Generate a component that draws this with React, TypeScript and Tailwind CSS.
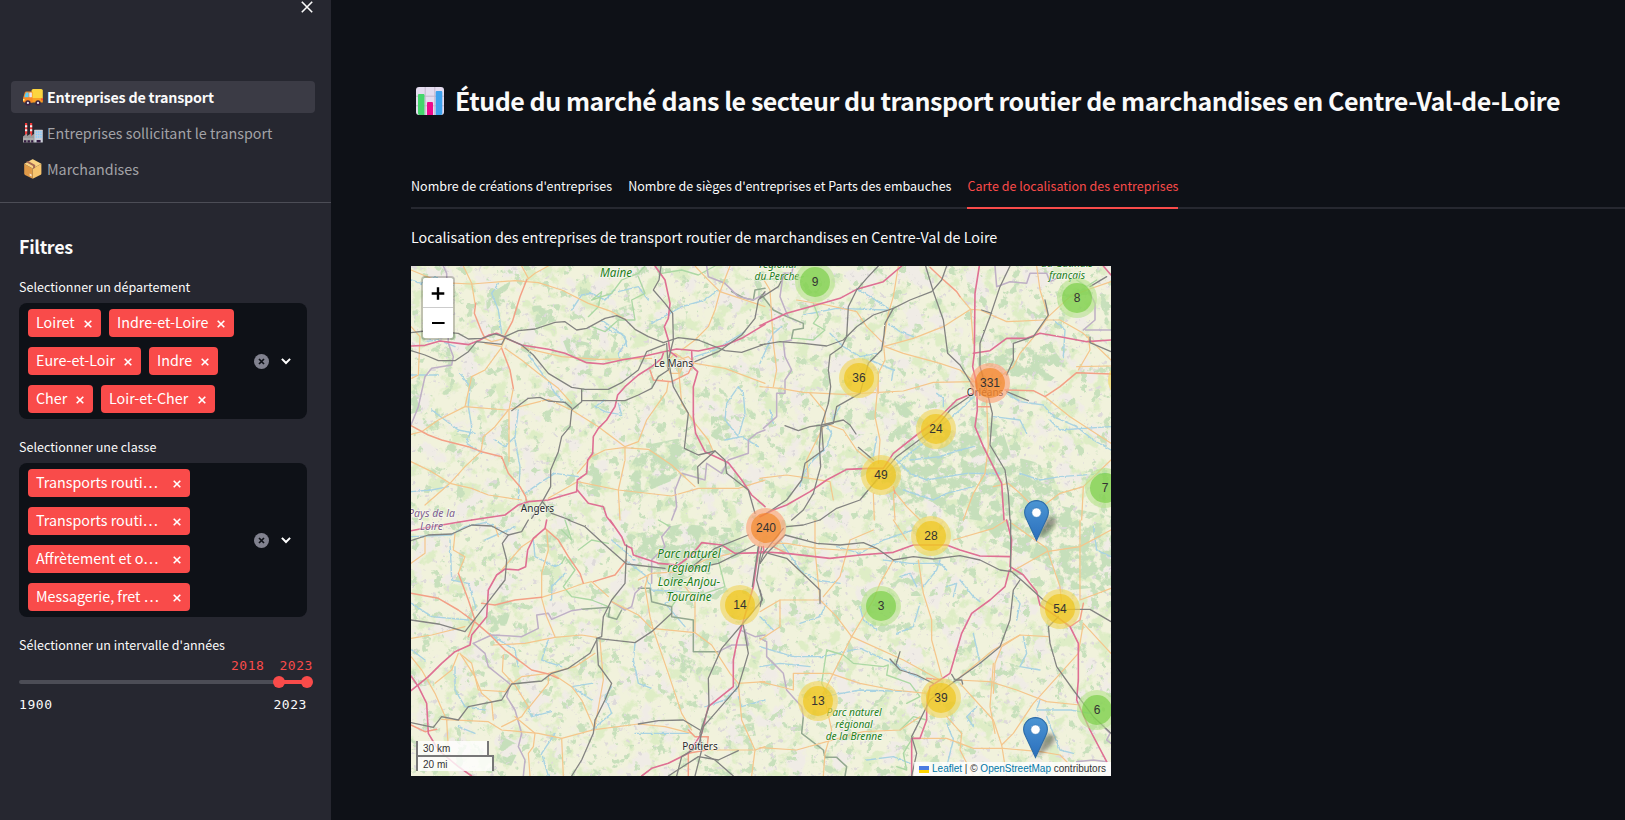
import type { ReactNode } from "react";

const sans = "font-['Noto_Sans_CJK_JP','Noto_Sans',sans-serif]";

type Quad = {
  motorway: string[];
  trunk: string[];
  road: string[];
  rail: string[];
  river: string[];
  border: string[];
  park: string[];
  parkEdge: string[];
};

const northWest: Quad = {
  motorway: [
    "18,258 60,256 105,243 190,254 225,240 250,226 275,220 310,238 350,255 430,268 480,280 545,308 595,312 650,300 720,288 770,277 815,267 880,273 960,256 1010,235 1080,193",
    "750,18 780,60 795,130 790,175 778,200 790,240 795,275 815,290",
    "775,280 770,295 740,320 700,345 660,380 638,405 630,440 605,480 580,505 565,530 563,580 548,600 545,640 517,660 515,695 470,708 430,720 370,725 340,735 300,765 200,780",
    "860,275 862,320 878,335 865,380 865,470 872,520 900,575 935,592 970,608 1010,660 1040,705 1080,740",
    "517,690 550,730 595,740 605,770 625,795",
  ],
  trunk: [
    "212,130 208,160 230,215 240,235",
    "300,225 322,185 345,110 365,60",
    "18,497 70,525 110,540 190,560 230,575 290,590 310,640 345,680 362,710 365,725",
    "290,265 315,330 325,385",
    "735,330 745,360 800,365 850,340 865,310",
  ],
  road: [
    "175,18 200,70 210,130",
    "18,30 110,68 200,72 330,62 400,68 470,90 550,130 620,155 665,180",
    "365,60 390,40 430,18",
    "350,18 370,55",
    "20,355 40,345 45,230 18,200",
    "290,262 240,330 200,350 180,440 100,480 50,515 18,523",
    "180,440 305,450 430,418 500,450 580,500 660,560 700,545 725,480 785,395 790,365",
    "325,385 312,450 312,605",
    "310,450 270,500 235,530 228,575",
    "228,575 180,620 135,670 60,735",
    "18,605 80,635 135,670 200,685 250,705 350,720",
    "300,265 350,300 400,340 460,385 500,430",
    "350,262 470,290 580,298 740,295",
    "517,640 560,590 600,570 655,563 730,568 800,615 870,680",
    "660,560 660,600 640,690 645,780",
    "430,715 517,665 640,690 800,708 880,685 1000,685 1080,660",
    "820,300 850,290 870,310 960,325 1080,370",
    "830,270 870,240 910,200 930,150 945,95 975,18",
    "820,320 830,430 870,490 910,540 925,575",
    "945,95 1080,140",
    "945,95 900,50 870,18",
    "240,235 260,245 300,235 290,260 240,250",
    "790,300 810,280 840,300 825,340 795,340 785,315",
  ],
  rail: [
    "18,218 60,213 100,215 160,220 190,237 230,235 270,222 300,230 340,212 390,207 450,187 480,185 515,210 545,205 600,175 635,167 660,178 690,208 730,230 775,248 820,233 880,240 960,272 1010,277 1080,252",
    "18,272 60,285 100,302 150,302 190,275 215,245 290,253 300,233 350,255 385,285 430,340 500,382 540,388 610,388 650,368 700,330 725,275 780,253",
    "530,388 530,425 500,450 495,500 470,530 460,575 437,630 437,680 412,725 380,775",
    "320,452 370,415 405,412 430,423 480,427 500,445",
    "530,422 660,422 700,405 740,385 760,350 790,330 785,250",
    "768,18 762,60 745,90 780,130 803,160 805,240 790,300 805,380 850,460 838,565 880,585 930,573 960,600 965,640 1030,690 1050,760",
    "870,305 940,275 1010,225 1050,175 1060,120 1080,95",
    "412,725 440,760 495,780",
    "930,573 878,620 880,670",
  ],
  river: [
    "145,75 90,50 50,70 18,60",
    "340,450 330,530 300,560 270,540",
    "370,285 430,365 450,400 480,430",
    "360,700 410,665 450,640 520,650",
    "600,200 620,215 650,220 665,245 640,280 645,300",
    "1000,380 965,430 960,480 1000,530 1020,460 1015,400 1000,380",
    "740,190 830,140 900,120 940,90",
    "340,720 345,620 330,540",
    "630,90 600,120 560,100 530,105 500,150",
    "165,340 195,380 190,440 200,500 185,550 230,580",
    "18,345 100,345",
    "80,450 120,480 160,510 210,520",
    "640,95 700,80 730,120",
    "960,540 1010,530 1060,560",
    "280,70 260,100 280,150 290,220",
    "150,260 100,240 60,245",
    "600,420 570,440 600,455 650,465 640,430",
    "870,290 930,270 1020,215",
    "18,695 80,690 130,680",
    "590,180 660,230 665,260",
  ],
  border: [
    "18,495 40,440 60,350 80,325 140,315 145,290 130,250 125,40 115,18",
    "1080,510 1055,520 1030,540 1030,580 970,600 950,640 905,610 900,660 830,640 810,690 815,740 800,780",
    "905,18 910,50 960,70 1000,110 1045,120 1080,100",
  ],
  park: [
    "550,170 580,140 590,95 560,120 620,100 650,60 700,40 720,18",
    "560,200 600,215 640,180 690,180 680,120 720,100 700,50",
    "770,40 830,30 880,45 930,18",
  ],
  parkEdge: ["980,95 1020,115 1045,120 1050,90 1080,85"],
};

const northEast: Quad = {
  motorway: [
    "0,197 80,160 150,140 240,115 290,88 370,65 425,18",
    "658,18 645,100 643,280 638,320 650,370 652,450 645,500 670,560 725,670 732,780",
    "640,280 690,272 740,235 800,235 840,220 900,230 980,245 1053,240",
    "650,395 590,420 530,480 470,525 400,580 370,625 330,625 260,628 200,660 150,695 80,735 40,750 0,770",
    "1030,18 1053,45",
  ],
  trunk: [
    "510,22 540,50 590,95 600,110",
    "1053,342 950,338 900,380 855,410 820,392 735,390",
    "400,680 405,700",
    "655,440 690,440",
  ],
  road: [
    "415,18 400,110 385,160 370,245 375,300 355,340 355,400",
    "0,380 60,385 130,397 250,403 430,393 520,367 650,365",
    "370,260 460,235 550,200 632,148 660,150 740,185 850,180 900,180 970,220 1053,300",
    "830,18 840,90 865,170 830,220 780,280 760,320 720,350",
    "600,110 632,148 640,250",
    "355,360 345,470 360,540 355,610",
    "150,400 195,455 195,490 250,510 290,570 340,610",
    "375,260 430,280 540,310 600,330 650,370",
    "680,420 685,560 675,640 640,700 610,780",
    "400,690 440,740 480,780",
    "970,680 965,780",
    "1053,600 970,680 900,700 840,745",
    "855,410 930,470 1053,550",
    "0,40 30,90 40,250 50,330 40,380",
    "110,120 200,135 290,155 320,200 365,245",
    "340,700 343,780",
    "400,700 405,780",
    "0,655 80,645 150,655 210,665 220,720",
    "145,650 140,600 190,500",
    "865,170 930,110 980,90 1053,65",
    "955,330 990,270 985,230",
    "950,320 1053,318",
    "700,680 745,670 780,700 860,780",
  ],
  rail: [
    "0,255 60,245 130,250 200,258 250,240 290,200 340,165 400,145 450,120 515,95 545,60 560,18",
    "355,18 320,55 290,90 265,140 260,230 245,260 210,285 205,330 212,380 205,430 183,500 178,560 182,620 160,700 130,750 95,780",
    "497,18 520,95 550,180 563,280 600,315 640,380",
    "750,18 720,80 690,170 660,250 660,320 680,390 697,460 690,555 735,630 745,700 750,780",
    "635,405 570,450 530,500 470,545 410,590 350,660 300,720 230,745 180,780",
    "400,145 375,190 372,225 365,270 325,310 300,400 230,440 220,490 185,500",
    "740,395 805,422",
    "740,345 760,300 760,250 820,230 865,165 855,120",
    "990,80 1040,50",
    "990,232 990,248 1053,275",
    "75,497 115,512 150,500 185,495 250,480 270,495 288,522",
    "295,562 340,600",
    "665,150 695,160",
    "0,115 55,80 75,40",
    "185,500 190,570 135,610 125,660 80,720 20,760",
  ],
  river: [
    "740,400 780,425 850,435 880,470 950,500 1000,540 1053,570",
    "640,410 600,450 540,500 500,540 430,595 380,640",
    "290,85 330,110 385,145",
    "385,190 420,215 460,230",
    "130,165 230,145 380,150",
    "210,220 250,260 300,290 350,280",
    "530,400 550,415 550,440",
    "0,310 40,220 65,200",
    "780,640 840,660 900,650 1040,640",
    "450,600 540,590 600,570 640,560",
    "410,600 450,640 500,660 620,640 720,640",
    "190,480 215,520 200,560 160,600 130,640 120,680",
    "910,290 915,210 880,180",
    "350,530 340,590",
    "330,300 400,330 395,360",
    "640,680 560,700 520,720 430,690",
    "870,480 900,510 1053,500",
    "215,480 240,440",
    "700,470 780,480 800,520",
    "30,450 40,490",
  ],
  border: [
    "705,18 710,80 750,65 800,70 810,40 860,40 870,65 900,50",
    "985,90 1005,130 1005,180 970,210 1053,210",
    "100,18 95,40 70,40 60,110 80,160 85,170",
    "95,240 70,245 75,290 95,330 75,360 75,400 50,400 50,470 10,505",
  ],
  park: [
    "0,60 60,55 90,60 130,50",
    "160,130 175,170 160,190 195,210 160,240 110,235 95,235",
    "950,60 980,80 1010,60",
  ],
  parkEdge: ["5,105 40,150 70,165 130,190 130,205 100,210 95,235"],
};

const southWest: Quad = {
  motorway: [
    "18,32 80,20 150,8 200,0",
    "425,0 420,25 385,55 368,90 362,140 340,150 300,147 275,165 250,210 245,290 200,345 195,375 150,395 110,430 70,470 18,512",
    "18,468 40,500 65,550 70,640 100,690 160,740 200,768",
    "615,0 650,50 660,75 680,85 685,105 760,130 820,135 860,105 890,68 950,75 990,100 1080,98",
    "1062,80 1045,200 1010,320 997,360 985,420 985,500 910,560 890,640 850,700 790,730 740,745 710,768",
  ],
  trunk: [
    "18,220 100,235 160,270 215,310 250,340 300,390 380,450 430,462 460,475",
    "230,250 270,255 330,240 410,232",
    "420,25 460,60 490,110 525,160 535,190",
    "565,185 630,165 665,120",
    "160,160 190,240 210,300 190,350",
    "850,630 870,650 910,650 905,690 850,700 850,768",
    "18,615 60,635 95,628",
  ],
  road: [
    "60,50 60,100 18,130",
    "150,40 145,90 180,110 160,160",
    "410,232 410,160 430,90 425,30",
    "410,232 480,210 530,192 560,185 610,230",
    "18,355 80,345 180,320",
    "410,235 425,290 450,350",
    "265,375 360,370 450,352 530,345 575,352",
    "620,245 700,285 740,325 870,338 920,375 975,460 1000,490 1080,485",
    "870,338 870,240 840,200",
    "730,165 720,200 735,290 745,330 790,460 830,580 860,630",
    "585,360 595,480 570,620",
    "295,405 292,455 330,495 370,560 350,590 290,620",
    "430,465 430,490 370,565",
    "440,460 500,500 530,540 570,630",
    "570,628 470,655 400,640 290,630 250,605 110,598",
    "470,655 475,768",
    "330,590 390,640 385,680 370,700 375,768",
    "575,628 700,612 780,620 860,640",
    "18,410 50,450 90,520 125,600 130,690",
    "1000,490 1010,600 1050,690 1040,768",
    "900,690 1050,690 1080,680",
    "165,400 210,470 230,520 260,545 265,600",
    "170,405 200,430 220,510 300,515 320,490",
    "160,400 140,450 90,490",
    "320,492 350,470 430,460 510,440 570,400",
    "290,150 350,80 395,50",
    "700,180 740,160 830,155 900,120 980,100",
    "280,50 270,18",
  ],
  rail: [
    "18,62 70,45 140,42 200,15 260,18 310,45 350,35 370,0",
    "310,45 292,70 305,120 300,180 250,245 215,290 180,335 100,312 18,300",
    "490,0 540,20 600,75 665,132 780,145",
    "665,75 660,190 620,240 595,290 590,350 575,355 580,435 620,490 600,540 570,600 565,640 530,720 500,768",
    "575,355 690,368 740,335 800,280",
    "575,360 555,400 490,445 440,460 410,483 320,492 290,540 190,560 160,600 110,590 85,622 18,608",
    "1070,80 1055,180 1072,240 1010,315 950,385 910,475 912,560 885,640 890,690 870,768",
    "1015,315 1030,400 1000,500 930,580 895,620 880,680 830,710 815,768",
    "700,612 760,602 835,600 885,630",
    "850,150 930,85 1030,45",
    "870,145 940,130 1050,75",
    "790,768 880,710 940,720 1000,692",
    "900,705 930,720 985,768",
    "1060,80 1042,200",
  ],
  river: [
    "18,50 140,45 180,20 240,8 280,25",
    "135,60 140,180 190,190 215,270",
    "240,60 330,20",
    "385,60 390,110 450,140 470,130",
    "690,370 685,420 700,490 740,505",
    "560,630 620,580 600,530 620,500",
    "690,640 760,640 850,640",
    "250,340 330,390 340,440",
    "430,360 410,420 470,440",
    "370,560 380,590 440,575",
    "450,640 410,700 430,768",
    "160,620 210,640",
    "20,390 60,420",
    "560,540 500,500 560,490",
    "660,120 720,165 740,210 830,215",
    "150,440 150,510 180,560 240,570",
    "20,250 80,290 190,300",
    "480,160 440,200 440,240",
    "620,60 690,120",
    "1080,540 1010,560 1000,530",
    "900,560 960,540 1000,500",
    "800,240 780,250 840,320",
  ],
  border: [
    "205,370 240,400 250,440 315,492 305,530 330,570 350,640 340,680 360,720 355,768",
    "205,370 260,345 350,350 400,325 395,285 430,280 440,298 500,272 530,268",
    "1005,330 1050,350 1080,345",
    "740,190 740,120 780,80 770,50 795,20",
    "620,245 660,270 680,260 690,220 710,200",
    "940,395 980,375 1030,375 1020,330",
  ],
  park: [
    "470,130 480,110 510,150 475,200 500,230 560,240 610,260",
    "795,20 760,0",
    "470,30 500,60 480,0",
    "610,70 560,60 520,90",
    "800,260 830,215 900,220 960,200 940,120",
  ],
  parkEdge: [
    "530,268 615,262 610,290 635,298 650,270",
    "700,205 735,205 740,245 800,260 800,290 865,300 865,395 940,395",
  ],
};

const southEast: Quad = {
  motorway: [
    "0,95 80,100 210,115 300,105 400,97 460,75 560,75 600,90 660,108 750,110",
    "740,0 755,60 750,140 790,165 830,215 840,255 890,290 930,320 955,370 955,480 950,540 990,630 1040,725",
    "748,150 735,200 690,240 635,280 605,340 570,460 510,500 500,560 500,600 480,655 455,655 455,768",
    "10,80 12,100",
  ],
  trunk: [
    "970,250 960,300 930,320",
    "540,480 500,475",
    "80,100 40,80",
  ],
  road: [
    "0,360 60,320 60,240 0,275",
    "60,240 180,240",
    "180,240 230,290 275,350 430,420 540,480",
    "275,350 340,240 360,190 400,120",
    "165,0 165,90 180,240",
    "40,70 80,70 170,85 240,90 350,85",
    "190,230 240,170 270,60 340,30",
    "275,350 235,430 210,480 190,520 215,630 195,700 190,768",
    "0,485 100,510 100,460 210,460 300,490 400,510 500,520",
    "0,683 110,690 200,665 310,635 420,630 480,590",
    "475,120 490,220 515,300 515,360 545,470",
    "590,480 690,485 770,510 860,545 960,555",
    "600,490 700,600 725,675 740,768",
    "725,675 760,640 820,550 955,400 970,310",
    "700,520 705,430 725,380 780,345 865,350",
    "755,10 860,85 900,200 905,250",
    "960,0 960,240 1053,205",
    "755,155 860,95 960,80 1053,30",
    "460,655 560,655 640,685 730,685 840,695 900,705 930,735",
    "560,590 605,640 600,690 640,768",
    "590,480 700,390 780,345",
    "1053,400 970,310",
    "440,60 400,0",
    "700,430 690,560 705,640",
    "580,60 700,25 740,0",
  ],
  rail: [
    "0,130 25,95 75,45 170,70 240,75 310,68 350,85 400,120 460,110 520,117 600,107 660,120 720,150 755,155 790,185 850,240 900,268 990,268 1053,305",
    "752,0 752,155",
    "780,180 760,210 750,300 720,380 660,430 580,487 510,540 455,650 470,700 455,768",
    "390,417 420,450 470,465 520,490",
    "25,100 80,115 180,210 180,250",
    "895,290 865,320 870,370 890,440 940,510 1000,590 1053,640",
    "420,395 408,435",
    "575,463 585,480 605,480 608,492",
    "80,20 130,15 180,0",
    "0,130 10,100 70,25",
    "0,210 6,235 0,260",
  ],
  river: [
    "0,380 100,410 190,410 300,385 400,430 450,460 490,480",
    "60,60 120,150 170,180 240,190",
    "540,120 530,150 490,200",
    "600,180 640,230 660,245",
    "370,120 450,130 540,130 560,150",
    "790,350 800,400 780,440 840,450",
    "300,260 310,300 350,330",
    "190,530 300,510 450,515",
    "480,250 460,320 410,340",
    "990,580 930,570 830,570 840,540",
    "320,720 400,710 450,730",
    "560,610 580,660 560,740 620,768",
    "760,220 780,250 770,300",
    "640,340 660,430",
    "230,80 300,100 370,60 460,30",
    "420,170 450,160 470,200",
    "120,310 180,290 200,250",
    "1000,20 1010,90 1053,110",
    "0,290 40,330",
    "560,200 590,190 580,230",
    "860,590 900,690 940,700",
    "0,440 60,430 150,440",
    "640,620 620,590 650,560",
  ],
  border: [
    "0,355 20,365 20,410 70,460 80,510 125,560 130,590",
    "950,725 1000,720 1040,725",
    "1035,625 1050,640 1040,660 1053,670",
  ],
  park: [
    "200,390 185,490 200,520",
    "200,390 250,405 280,430 370,440 385,435 380,465 450,490 480,530 440,550",
    "420,630 460,590 500,600",
    "460,650 430,700 440,750 410,740",
  ],
  parkEdge: ["130,590 125,640 190,690 195,712 230,712 260,740 255,768"],
};

function Lines({ items, color, width }: { items: string[]; color: string; width: number }) {
  return (
    <g fill="none" stroke={color} strokeWidth={width} strokeLinejoin="round" strokeLinecap="round">
      {items.map((p) => (
        <polyline key={p} points={p} />
      ))}
    </g>
  );
}

function Quadrant({ q, x, y }: { q: Quad; x: number; y: number }) {
  return (
    <g transform={`translate(${x} ${y}) scale(0.33333)`}>
      <g filter="url(#wiggleRiver)">
        <Lines items={q.river} color="#a9d3e2" width={4.2} />
      </g>
      <g filter="url(#wiggle)">
        <Lines items={q.park} color="#acd8a4" width={4} />
        <Lines items={q.parkEdge} color="#93a890" width={4.6} />
        <Lines items={q.border} color="#bfb0c6" width={4.6} />
        <Lines items={q.road} color="#f5c68c" width={3.7} />
        <Lines items={q.trunk} color="#f3a086" width={4.4} />
        <Lines items={q.motorway} color="#df6f93" width={4.8} />
        <Lines items={q.rail} color="#838381" width={3.9} />
      </g>
    </g>
  );
}

function Speckle({ id, freq, seed, gain, cut, color }: { id: string; freq: number; seed: number; gain: number; cut: number; color: string }) {
  return (
    <filter id={id} x="0" y="0" width="100%" height="100%" colorInterpolationFilters="sRGB">
      <feTurbulence type="fractalNoise" baseFrequency={freq} numOctaves={5} seed={seed} />
      <feColorMatrix type="matrix" values={`0 0 0 0 0  0 0 0 0 0  0 0 0 0 0  ${gain} 0 0 0 ${-gain * cut}`} result="m" />
      <feFlood floodColor={color} />
      <feComposite in2="m" operator="in" />
      <feComposite in2="SourceGraphic" operator="in" />
    </filter>
  );
}

const woods = [
  "480,165 505,150 540,165 560,150 590,160 600,190 640,200 650,240 700,250 700,330 640,300 590,280 570,255 540,250 520,235 480,240 470,215 500,190",
  "566,92 600,82 640,80 655,100 640,115 610,112 590,108 568,104",
  "468,132 490,136 505,150 495,152 470,140",
  "215,270 270,258 320,262 330,290 300,300 260,320 230,300",
  "590,395 610,400 600,410 580,420 590,400",
  "75,30 100,15 90,40 76,50",
  "120,40 150,38 145,55 128,60",
  "150,70 190,80 200,95 160,95",
  "200,45 220,38 226,46 205,54",
  "300,140 325,160 315,180 300,170",
  "230,180 270,172 290,190 260,215 225,230 215,210",
  "180,200 195,205 190,225 175,220",
  "640,290 690,290 700,320 650,325",
  "255,380 285,395 278,412 262,400",
  "320,450 340,445 345,470 325,470",
  "90,470 110,480 100,500 85,495",
  "75,350 100,345 95,360 75,358",
  "130,270 160,262 155,285 130,280",
  "498,315 510,310 512,330 500,330",
  "25,80 38,75 40,90 28,92",
  "0,130 10,128 10,145 0,148",
  "440,200 455,195 460,205 445,215",
];

function BaseMap() {
  return (
    <svg className="block" width="700" height="510" viewBox="0 0 700 510">
      <defs>
        <Speckle id="pale" freq={0.06} seed={7} gain={9} cut={0.55} color="#deedc6" />
        <Speckle id="beige" freq={0.045} seed={22} gain={9} cut={0.57} color="#f0ece6" />
        <Speckle id="wood" freq={0.09} seed={41} gain={14} cut={0.63} color="#c8e0bc" />
        <Speckle id="dense" freq={0.1} seed={13} gain={9} cut={0.43} color="#c6dfbb" />
        <Speckle id="town" freq={0.15} seed={5} gain={12} cut={0.69} color="#dedada" />
        <filter id="wiggle" x="-5%" y="-5%" width="110%" height="110%">
          <feTurbulence type="fractalNoise" baseFrequency="0.13" numOctaves={2} seed={3} />
          <feDisplacementMap in="SourceGraphic" scale={4} xChannelSelector="R" yChannelSelector="G" />
        </filter>
        <filter id="wiggleRiver" x="-5%" y="-5%" width="110%" height="110%">
          <feTurbulence type="fractalNoise" baseFrequency="0.1" numOctaves={1} seed={9} />
          <feDisplacementMap in="SourceGraphic" scale={9} xChannelSelector="R" yChannelSelector="G" />
        </filter>
      </defs>
      <rect width="700" height="510" fill="#f1f2dc" />
      <rect width="700" height="510" filter="url(#pale)" />
      <rect width="700" height="510" filter="url(#beige)" />
      <rect width="700" height="510" filter="url(#wood)" />
      <g filter="url(#dense)">
        {woods.map((w) => (
          <polygon key={w} points={w} />
        ))}
      </g>
      <rect width="700" height="510" filter="url(#town)" />
      <Quadrant q={northWest} x={-6} y={-6} />
      <Quadrant q={northEast} x={349} y={-6} />
      <Quadrant q={southWest} x={-6} y={254} />
      <Quadrant q={southEast} x={349} y={254} />
      <g className="font-['Noto_Sans',sans-serif]" textAnchor="middle" stroke="#ffffff90" strokeWidth="1.6" paintOrder="stroke" strokeLinejoin="round">
        <g fill="#2c2c2c" fontSize="10">
          <text x="262.5" y="101">Le Mans</text>
          <text x="126.500" y="246">Angers</text>
          <text x="574" y="130">Orléans</text>
          <text x="289" y="484">Poitiers</text>
        </g>
        <g fill="#7f5f8d" fontStyle="italic" fontSize="10.5">
          <text x="20.5" y="251">Pays de la</text>
          <text x="20.5" y="264">Loire</text>
        </g>
        <g fill="#1f801c" fontStyle="italic">
          <g fontSize="11.700">
            <text x="205" y="11">Maine</text>
            <text x="278" y="291.500">Parc naturel</text>
            <text x="278" y="306">régional</text>
            <text x="278" y="320">Loire-Anjou-</text>
            <text x="278" y="334.500">Touraine</text>
          </g>
          <g fontSize="10.200">
            <text x="367" y="1.500">régional</text>
            <text x="366" y="14">du Perche</text>
            <text x="656" y="1">du Gâtinais</text>
            <text x="656" y="13">français</text>
            <text x="443" y="450">Parc naturel</text>
            <text x="443" y="462">régional</text>
            <text x="443" y="474">de la Brenne</text>
          </g>
        </g>
      </g>
    </svg>
  );
}

const tones = {
  green: ["bg-[#b5e28c99]", "bg-[#6ecc3999]"],
  yellow: ["bg-[#f1d35799]", "bg-[#f0c20c99]"],
  orange: ["bg-[#fd9c7399]", "bg-[#f1801799]"],
} as const;

const clusters: { x: number; y: number; n: string; tone: keyof typeof tones }[] = [
  { x: 404, y: 16, n: "9", tone: "green" },
  { x: 666, y: 32, n: "8", tone: "green" },
  { x: 448, y: 112, n: "36", tone: "yellow" },
  { x: 717, y: 114, n: "", tone: "yellow" },
  { x: 579, y: 117, n: "331", tone: "orange" },
  { x: 525, y: 163, n: "24", tone: "yellow" },
  { x: 470, y: 209, n: "49", tone: "yellow" },
  { x: 694, y: 222, n: "7", tone: "green" },
  { x: 355, y: 262, n: "240", tone: "orange" },
  { x: 520, y: 270, n: "28", tone: "yellow" },
  { x: 470, y: 340, n: "3", tone: "green" },
  { x: 329, y: 339, n: "14", tone: "yellow" },
  { x: 649, y: 343, n: "54", tone: "yellow" },
  { x: 530, y: 432, n: "39", tone: "yellow" },
  { x: 407, y: 435, n: "13", tone: "yellow" },
  { x: 686, y: 444, n: "6", tone: "green" },
];

const pins = [
  { x: 625, y: 275 },
  { x: 624, y: 492 },
];

function Pin({ x, y }: { x: number; y: number }) {
  return (
    <svg className="absolute" style={{ left: x - 12, top: y - 41 }} width="42" height="42" viewBox="0 0 42 42">
      <defs>
        <linearGradient id="pin" x1="0" y1="0" x2="0" y2="1">
          <stop offset="0" stopColor="#4b95d3" />
          <stop offset="1" stopColor="#2b6fbd" />
        </linearGradient>
        <filter id="soft" x="-40%" y="-30%" width="180%" height="160%">
          <feGaussianBlur stdDeviation="2" />
        </filter>
      </defs>
      <path d="M13 40 L20 22C24 14 33 16 32 22 C31 28 22 34 13 40Z" fill="#000" opacity="0.38" filter="url(#soft)" />
      <path d="M12.5.6C5.8.6.6 5.800.6 12.400c0 2.600 1 4.800 2 6.800L12.500 40.400 22.400 19.200c1-2 2-4.200 2-6.800C24.400 5.800 19.200.6 12.500.6Z" fill="url(#pin)" stroke="#2e6da8" strokeWidth="1.1" />
      <circle cx="12.5" cy="12.6" r="4.700" fill="#fff" stroke="#3778b5" strokeWidth=".6" />
    </svg>
  );
}

function MapView() {
  return (
    <div className="relative h-[510px] w-[700px] overflow-hidden bg-[#f1f2dc] font-['Liberation_Sans',sans-serif]">
      <BaseMap />
      {clusters.map((c) => (
        <div key={`${c.x}-${c.y}`} className={`absolute flex size-10 items-center justify-center rounded-full ${tones[c.tone][0]}`} style={{ left: c.x - 20, top: c.y - 20 }}>
          <div className={`flex size-[30px] items-center justify-center rounded-full text-[12px] leading-none text-[#333] ${tones[c.tone][1]}`}>{c.n}</div>
        </div>
      ))}
      {pins.map((p) => (
        <Pin key={p.y} x={p.x} y={p.y} />
      ))}
      <div className="absolute left-[10px] top-[10px] flex flex-col overflow-hidden rounded-[4px] border-2 border-black/20 bg-clip-padding">
        <button className="flex h-[30px] w-[30px] items-center justify-center border-b border-[#ccc] bg-white">
          <svg width="14" height="14" viewBox="0 0 14 14">
            <path d="M.7 7.500h12.600M7 1.200v12.600" stroke="#000" strokeWidth="2.400" />
          </svg>
        </button>
        <button className="flex h-[30px] w-[30px] items-center justify-center bg-white">
          <svg width="14" height="14" viewBox="0 0 14 14">
            <path d="M1 7h12.600" stroke="#000" strokeWidth="2" />
          </svg>
        </button>
      </div>
      <div className="absolute bottom-[5px] left-[5px] flex flex-col items-start text-[10px] leading-[11px] text-[#333]">
        <div className="h-[16px] w-[73px] border-2 border-t-0 border-[#777] bg-white/80 px-[5px] pt-[2px]">30 km</div>
        <div className="-mt-[2px] h-[16px] w-[78px] border-2 border-b-0 border-[#777] bg-white/80 px-[5px] pt-[2px]">20 mi</div>
      </div>
      <div className="absolute bottom-0 right-0 flex h-[14px] items-center whitespace-pre bg-white/80 px-[5px] text-[10px] leading-[14px] text-[#333]">
        <span className="mr-[3px] flex h-[7px] w-[10px] flex-col">
          <span className="h-[4px] bg-[#4c7be1]" />
          <span className="h-[3px] bg-[#ffd500]" />
        </span>
        <span className="text-[#0078a8]">Leaflet</span> | © <span className="text-[#0078a8]">OpenStreetMap</span> contributors
      </div>
    </div>
  );
}

function TruckIcon() {
  return (
    <svg width="20" height="20" viewBox="0 0 20 20">
      <rect x="8.6" y="2" width="11.200" height="12" rx="1.6" fill="#fcd53f" />
      <path d="M9 11h10.800v4.500h-17L9 13Z" fill="#f9a125" />
      <path d="M3.400 4.500H8.600c.6 0 .9.300.9.900V15.500H1.200C.4 15.500 0 15 0 14.300V11.500L1.600 6C1.900 5 2.400 4.500 3.400 4.500Z" fill="#f98a26" />
      <path d="M3.300 5.500H5.600V10.200H1.400L2.600 6.200C2.700 5.700 2.900 5.500 3.300 5.500Z" fill="#5fd0f5" />
      <rect x="6.300" y="5.500" width="2.600" height="4.700" rx=".4" fill="#e9e4f0" />
      <rect x="0" y="12" width="1.500" height="1.700" fill="#fff478" />
      <rect x="18.400" y="11.400" width="1.400" height="2" fill="#f8312f" />
      <circle cx="4.900" cy="15.900" r="2.700" fill="#3a2440" />
      <circle cx="15" cy="15.900" r="2.700" fill="#3a2440" />
      <circle cx="4.900" cy="15.900" r="1.100" fill="#e6e0ea" />
      <circle cx="15" cy="15.900" r="1.100" fill="#e6e0ea" />
    </svg>
  );
}

function FactoryIcon() {
  return (
    <svg width="20" height="20" viewBox="0 0 20 20">
      <path d="M2 0h2.200v13H2zM7 0h2.200v13H7z" fill="#f03a3a" />
      <path d="M2 2.300h2.200v2H2zM2 6.300h2.200v2H2zM7 2.300h2.200v2H7zM7 6.300h2.200v2H7z" fill="#eee" />
      <path d="M0 13.500 4 10.500v2.500l4-2.500v2.500l3.500-2.500V19.600H0Z" fill="#9b9b9b" />
      <rect x="11.200" y="6.700" width="8.600" height="12.900" rx=".5" fill="#c9cdd6" />
      <path d="M12.600 8.300h1.500v1.500h-1.500zM14.900 8.300h1.500v1.500h-1.500zM17.200 8.300h1.500v1.500h-1.500zM12.600 10.800h1.500v1.500h-1.500zM14.900 10.800h1.500v1.500h-1.500zM17.200 10.800h1.500v1.500h-1.500zM12.600 13.300h1.500v1.500h-1.500zM14.900 13.300h1.500v1.500h-1.500zM17.200 13.300h1.500v1.500h-1.500z" fill="#83cbff" />
      <path d="M1 17.300h2.300v2.300H1zM4.600 17.300h2.300v2.300H4.600zM8.200 17.300h2v2.300h-2zM13.600 17h4v2.600h-4z" fill="#321b41" />
      <path d="M0 16h10.600" stroke="#c4c4c4" strokeWidth=".8" />
    </svg>
  );
}

function ParcelIcon() {
  return (
    <svg width="20" height="20" viewBox="0 0 20 20">
      <path d="M1.200 4.800 9.700 9.400V19.800L2 15.900c-.5-.3-.8-.8-.8-1.400Z" fill="#e09a48" />
      <path d="M18.400 4.800 9.700 9.400V19.800l8-4c.5-.3.7-.7.700-1.300Z" fill="#f7c56e" />
      <path d="M1.200 4.800 9 .5c.5-.3.900-.3 1.400 0L18.400 4.800 9.700 9.400Z" fill="#fad282" />
      <path d="M3.700 3.400 6.300 2l8.300 4.800v3.400l-2.500 1.200V8Z" fill="#a56953" transform="translate(-.2 .2) scale(.85)" />
      <path d="M6.600 14.600l2 1v2l-2-1z" fill="#f4e6d2" />
    </svg>
  );
}

function ChartIcon() {
  return (
    <svg width="28" height="28" viewBox="0 0 28 28">
      <rect width="28" height="28" rx="3" fill="#e4dcef" />
      <path d="M0 9.200h28M0 18.800h28M9.200 0v28M18.800 0v28" stroke="#c3b7cc" strokeWidth="1" />
      <path d="M2 8.300c0-.9.500-1.300 1.300-1.300H7.200c.8 0 1.300.4 1.300 1.300V28H4c-1.200 0-2-.6-2-2Z" fill="#44d66c" />
      <path d="M11 16.300c0-.9.500-1.300 1.300-1.300h3.400c.8 0 1.300.4 1.300 1.300V28h-6Z" fill="#ec0a8c" />
      <path d="M19.700 5.300c0-.9.500-1.300 1.300-1.300h4c.8 0 1.300.4 1.300 1.300V26c0 1.400-.6 2-2 2h-4.600Z" fill="#3ea2ee" />
    </svg>
  );
}

function Tag({ children, className }: { children: ReactNode; className: string }) {
  return (
    <span className={`flex h-7 items-center justify-between rounded-[4px] bg-[#f94b4a] pl-2 pr-[9px] text-[14.3px] text-white ${className}`}>
      <span className="whitespace-nowrap pb-0.5 leading-[26px]">{children}</span>
      <svg width="8" height="8" viewBox="0 0 8 8" className="mt-px">
        <path d="M.7.7l6.600 6.600M7.300.7.7 7.300" stroke="#fff" strokeWidth="1.600" />
      </svg>
    </span>
  );
}

function SelectActions() {
  return (
    <div className="flex items-center gap-3 pr-4">
      <svg width="15" height="15" viewBox="0 0 15 15">
        <circle cx="7.500" cy="7.500" r="7.500" fill="#81828f" />
        <path d="M5 5l5 5M10 5l-5 5" stroke="#0e1117" strokeWidth="1.700" />
      </svg>
      <svg width="10" height="7" viewBox="0 0 10 7">
        <path d="M.9.9 5 5 9.100.9" fill="none" stroke="#fff" strokeWidth="2" />
      </svg>
    </div>
  );
}

function NavItem({ icon, label, active }: { icon: ReactNode; label: string; active?: boolean }) {
  return (
    <a className={`flex h-8 items-center gap-1 rounded-[4px] pl-3 text-[14.3px] ${active ? "bg-[#3b3b45] font-bold tracking-[-0.2px] text-[#fafafa]" : "text-[#a3a3a7]"}`}>
      {icon}
      <span className="leading-8">{label}</span>
    </a>
  );
}

function Label({ children }: { children: ReactNode }) {
  return <div className="h-[21px] text-[12.53px] leading-[19px] text-[#fafafa]">{children}</div>;
}

function Sidebar() {
  return (
    <aside className="h-[820px] w-[331px] shrink-0 bg-[#262730]">
      <div className="flex h-[81px] justify-end pr-[18px] pt-[1px]">
        <svg width="12" height="12" viewBox="0 0 12 12">
          <path d="M.8.8l10.400 10.400M11.200.8.8 11.200" stroke="#fafafa" strokeWidth="1.600" />
        </svg>
      </div>
      <nav className="flex h-[122px] flex-col gap-1 border-b border-[#4c4d56] pl-[11px] pr-4">
        <NavItem icon={<TruckIcon />} label="Entreprises de transport" active />
        <NavItem icon={<FactoryIcon />} label="Entreprises sollicitant le transport" />
        <NavItem icon={<ParcelIcon />} label="Marchandises" />
      </nav>
      <div className="flex flex-col pl-[19px] pr-6 pt-[32px]">
        <h2 className="h-6 text-[17.9px] font-bold leading-[22px] tracking-[-0.3px] text-[#fafafa]">Filtres</h2>
        <div className="mt-[18px]">
          <Label>Selectionner un département</Label>
        </div>
        <div className="mt-[5px] flex h-[116px] items-center justify-between rounded-lg bg-[#0e1117]">
          <div className="flex flex-col gap-[10px] pl-[9px]">
            <div className="flex gap-2">
              <Tag className="w-[73px]">Loiret</Tag>
              <Tag className="w-[125px]">Indre-et-Loire</Tag>
            </div>
            <div className="flex gap-2">
              <Tag className="w-[113px]">Eure-et-Loir</Tag>
              <Tag className="w-[69px]">Indre</Tag>
            </div>
            <div className="flex gap-2">
              <Tag className="w-[65px]">Cher</Tag>
              <Tag className="w-[114px]">Loir-et-Cher</Tag>
            </div>
          </div>
          <SelectActions />
        </div>
        <div className="mt-[18px]">
          <Label>Selectionner une classe</Label>
        </div>
        <div className="mt-[5px] flex h-[154px] items-center justify-between rounded-lg bg-[#0e1117]">
          <div className="flex flex-col gap-[10px] pl-[9px]">
            <Tag className="w-[162px]">Transports routi…</Tag>
            <Tag className="w-[162px]">Transports routi…</Tag>
            <Tag className="w-[162px]">Affrètement et o…</Tag>
            <Tag className="w-[162px]">Messagerie, fret …</Tag>
          </div>
          <SelectActions />
        </div>
        <div className="mt-[18px]">
          <Label>Sélectionner un intervalle d'années</Label>
        </div>
        <div className="-mr-[6px] flex h-[20px] justify-end gap-[15px] font-['DejaVu_Sans_Mono',monospace] text-[13px] leading-[20px] tracking-[0.55px] text-[#f94b4a]">
          <span>2018</span>
          <span>2023</span>
        </div>
        <div className="-mr-[6px] flex h-3 items-center">
          <span className="h-1 w-[255px] rounded-l-full bg-[#4c4d56]" />
          <span className="-ml-px size-3 rounded-full bg-[#f94b4a]" />
          <span className="-mx-px h-1 flex-1 bg-[#f94b4a]" />
          <span className="size-3 rounded-full bg-[#f94b4a]" />
        </div>
        <div className="mt-[6px] flex h-[20px] justify-between font-['DejaVu_Sans_Mono',monospace] text-[13px] leading-[21px] tracking-[0.55px] text-[#fafafa]">
          <span>1900</span>
          <span>2023</span>
        </div>
      </div>
    </aside>
  );
}

export default function App() {
  return (
    <div className={`flex h-[820px] w-[1625px] overflow-hidden bg-[#0e1117] text-[#fafafa] ${sans}`}>
      <Sidebar />
      <main className="flex min-w-0 flex-1 flex-col whitespace-nowrap pl-20">
        <h1 className="mt-[80px] flex h-[42px] items-center gap-[11px] pl-[5px] text-[25px] font-bold tracking-[-0.46px]">
          <ChartIcon />
          <span className="pb-0.5 leading-10">Étude du marché dans le secteur du transport routier de marchandises en Centre-Val-de-Loire</span>
        </h1>
        <div className="mt-[45px] flex h-[42px] gap-4 border-b-2 border-[#262830] text-[12.53px] leading-[38px]">
          <span>Nombre de créations d'entreprises</span>
          <span>Nombre de sièges d'entreprises et Parts des embauches</span>
          <span className="h-[42px] border-b-2 border-[#f94b4a] text-[#f94b4a]">Carte de localisation des entreprises</span>
        </div>
        <p className="mt-4 h-[41px] text-[14.32px] leading-[24px]">Localisation des entreprises de transport routier de marchandises en Centre-Val de Loire</p>
        <MapView />
      </main>
    </div>
  );
}
